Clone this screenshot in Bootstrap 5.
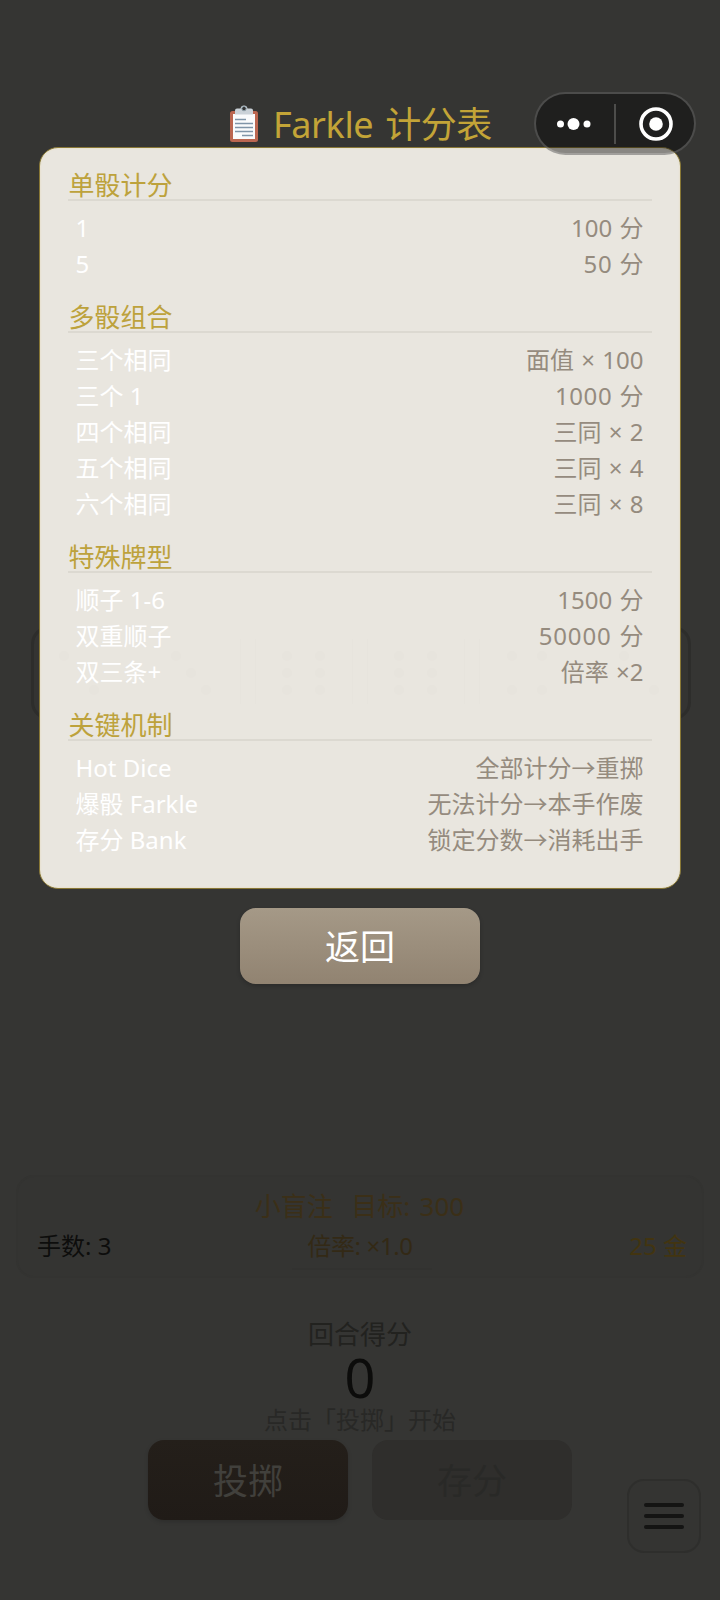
<!DOCTYPE html>
<html lang="zh-CN">
<head>
<meta charset="utf-8">
<meta name="viewport" content="width=device-width, initial-scale=1">
<title>Farkle 计分表</title>
<link href="https://cdn.jsdelivr.net/npm/bootstrap@5.3.0/dist/css/bootstrap.min.css" rel="stylesheet">
<style>
  body { background: #353533; font-family: "Noto Sans", "Noto Sans CJK SC", sans-serif; height: 1600px; overflow: hidden; }
  .game { height: 1600px; padding-top: 626px; }
  .dice-tray { width: 660px; height: 94px; margin-left: 31px; border: 3px solid #2d2d2b; border-radius: 18px; background: #343432; }
  .hud { width: 688px; height: 103px; margin: 455px 0 0 16px; border: 2px solid #333331; border-radius: 18px; padding: 9px 15px 0 19px; line-height: 40px; font-size: 24px; background: #343432; }
  .hud-goal { font-size: 26px; color: #3b2f17; white-space: pre; word-spacing: 2.5px; padding-right: 5px; }
  .hud-row { display: grid; grid-template-columns: 1fr auto 1fr; }
  .hud-hands { color: #0d0d0c; }
  .hud-mult { color: #332915; letter-spacing: -.35px; margin-right: 4px; }
  .hud-gold { color: #423410; }
  .hud-bar { width: 140px; height: 2px; background: #323230; margin: 2px auto 0; }
  .turn { line-height: 36px; margin-top: 38px; height: 124px; }
  .turn-label { font-size: 26px; color: #22221f; }
  .turn-score { font-size: 54px; color: #0c0c0b; line-height: 50px; }
  .turn-hint { font-size: 24px; color: #282826; }
  .btn-game { font-size: 35px; line-height: 1; border: 0; border-radius: 16px; padding: 0; }
  .btn-roll { width: 200px; height: 80px; background: linear-gradient(#241f1a, #201b17); color: #41403c; box-shadow: 0 2px 4px rgba(0,0,0,.15); }
  .btn-bank { width: 200px; height: 80px; background: #2f2e2c; color: #292927; }
  .menu-btn { left: 627px; top: 1478.5px; width: 74px; height: 74px; border: 2px solid #2e2e2c; border-radius: 17px; background: #343432; padding: 0; }
  .rules { padding-top: 99px; }
  .rules-title { height: 48px; font-size: 36px; line-height: 50px; color: #c3a437; padding: 2px 0 0 1px; }
  .rules-title span { letter-spacing: -.4px; word-spacing: 3px; padding-top: 1px; }
  .rules-panel { width: 642px; height: 742px; border: 1.5px solid #887735; border-radius: 19px; background: #e9e6df; padding: 22.5px 28px 0 28px; margin-right: 1px; box-shadow: inset 0 0 2px #e4dab1; }
  .rules-head { height: 30px; line-height: 29px; font-size: 26px; color: #bda23c; border-bottom: 2px solid #dcd9d1; margin-bottom: 9px; text-indent: 1px; }
  .rules-sec { margin-bottom: 21px; }
  .rules-line { height: 36px; line-height: 36px; font-size: 24px; padding: 0 8px; color: #fff; white-space: nowrap; }
  .rules-line span:last-child { color: #958b7e; word-spacing: 1px; }
  .n { letter-spacing: .6px; }
  .btn-back { width: 240px; height: 76px; margin-top: 19px; background: linear-gradient(#a59987, #918371); color: #fff; box-shadow: 0 2px 4px rgba(0,0,0,.2); }
  .capsule { left: 534px; top: 92px; width: 162px; height: 63px; border-radius: 32px; border: 2px solid rgba(255,255,255,.2); background: rgba(0,0,0,.41); }
</style>
</head>
<body>
<main class="game">
  <div class="dice-tray"></div>
  <section class="hud">
    <div class="hud-goal text-center">小盲注  目标: 300</div>
    <div class="hud-row">
      <span class="hud-hands">手数: 3</span>
      <span class="hud-mult">倍率: ×1.0</span>
      <span class="hud-gold text-end">25 金</span>
    </div>
    <div class="hud-bar"></div>
  </section>
  <section class="turn text-center">
    <div class="turn-label">回合得分</div>
    <div class="turn-score">0</div>
    <div class="turn-hint">点击「投掷」开始</div>
  </section>
  <div class="d-flex justify-content-center gap-4">
    <button class="btn btn-game btn-roll">投掷</button>
    <button class="btn btn-game btn-bank">存分</button>
  </div>
  <button class="btn menu-btn position-absolute d-flex align-items-center justify-content-center" aria-label="菜单">
    <svg width="44" height="30" viewBox="0 0 44 30" stroke="#141413" stroke-width="4" stroke-linecap="round"><path d="M4 4H40M4 15H40M4 26H40"/></svg>
  </button>
</main>

<div class="rules position-absolute top-0 start-0 w-100 d-flex flex-column align-items-center">
  <h1 class="rules-title m-0 fw-normal d-flex align-items-center">
    <svg width="30" height="38" viewBox="0 0 30 38" style="margin-right:14px">
      <rect x="1" y="6" width="28" height="31" rx="2.5" fill="#bb6650"/>
      <path d="M4 9H26V34H4Z" fill="#fafbfc"/>
      <path d="M6 9.5V5.5Q6 3.5 8 3.5H11.5Q12 .5 15 .5T18.500 3.500H22Q24 3.500 24 5.500V9.500Z" fill="#cbd2d8"/>
      <circle cx="15" cy="3.600" r="2.200" fill="#333" stroke="#8fa0aa"/>
      <path d="M6 14.500H17M6 18.500H24M6 22.500H24M6 26.500H24M13 30.500H24" stroke="#8095a8" stroke-width="1.500"/>
    </svg>
    <span>Farkle 计分表</span>
  </h1>
  <div class="rules-panel position-relative">
    <svg class="position-absolute" style="left:0;top:476px" width="638" height="100" fill="#e7e4dd">
      <g fill="none" stroke="#e7e4dd"><path d="M200.500 15V80M215.500 15V80M312.500 15V80M327.500 15V80M424.500 15V80M439.500 15V80"/></g>
      <circle cx="24" cy="32" r="5"/><circle cx="54" cy="66" r="5"/>
      <circle cx="136" cy="32" r="5"/><circle cx="151" cy="49" r="5"/><circle cx="166" cy="66" r="5"/>
      <circle cx="247" cy="32" r="5"/><circle cx="280" cy="32" r="5"/><circle cx="247" cy="49" r="5"/><circle cx="280" cy="49" r="5"/><circle cx="247" cy="66" r="5"/><circle cx="280" cy="66" r="5"/>
      <circle cx="359" cy="32" r="5"/><circle cx="392" cy="32" r="5"/><circle cx="359" cy="49" r="5"/><circle cx="392" cy="49" r="5"/><circle cx="359" cy="66" r="5"/><circle cx="392" cy="66" r="5"/>
      <circle cx="472" cy="32" r="5"/><circle cx="502" cy="32" r="5"/><circle cx="472" cy="66" r="5"/><circle cx="502" cy="66" r="5"/>
      <circle cx="584" cy="32" r="5"/><circle cx="614" cy="66" r="5"/>
    </svg>
    <div class="position-relative">
    <section class="rules-sec">
      <div class="rules-head">单骰计分</div>
      <div class="rules-line d-flex justify-content-between"><span>1</span><span>100 分</span></div>
      <div class="rules-line d-flex justify-content-between"><span>5</span><span><b class="n fw-normal">50</b> 分</span></div>
    </section>
    <section class="rules-sec">
      <div class="rules-head">多骰组合</div>
      <div class="rules-line d-flex justify-content-between"><span>三个相同</span><span>面值 × 100</span></div>
      <div class="rules-line d-flex justify-content-between"><span>三个 1</span><span><b class="n fw-normal">1000</b> 分</span></div>
      <div class="rules-line d-flex justify-content-between"><span>四个相同</span><span>三同 × 2</span></div>
      <div class="rules-line d-flex justify-content-between"><span>五个相同</span><span>三同 × 4</span></div>
      <div class="rules-line d-flex justify-content-between"><span>六个相同</span><span>三同 × 8</span></div>
    </section>
    <section class="rules-sec">
      <div class="rules-head">特殊牌型</div>
      <div class="rules-line d-flex justify-content-between"><span>顺子 1-6</span><span>1500 分</span></div>
      <div class="rules-line d-flex justify-content-between"><span>双重顺子</span><span style="letter-spacing:.8px;margin-right:-.8px">50000 分</span></div>
      <div class="rules-line d-flex justify-content-between"><span>双三条+</span><span>倍率 ×2</span></div>
    </section>
    <section>
      <div class="rules-head">关键机制</div>
      <div class="rules-line d-flex justify-content-between"><span>Hot Dice</span><span>全部计分→重掷</span></div>
      <div class="rules-line d-flex justify-content-between"><span>爆骰 Farkle</span><span>无法计分→本手作废</span></div>
      <div class="rules-line d-flex justify-content-between"><span>存分 Bank</span><span>锁定分数→消耗出手</span></div>
    </section>
    </div>
  </div>
  <button class="btn btn-game btn-back">返回</button>
</div>

<div class="capsule position-absolute">
  <svg class="d-block" width="158" height="59" viewBox="0 0 158 59" fill="#fff">
    <circle cx="24.500" cy="30" r="3.500"/><circle cx="37.500" cy="30" r="6"/><circle cx="51" cy="30" r="3.500"/>
    <path d="M79 10V50" stroke="#4d4d4b" stroke-width="2"/>
    <circle cx="120" cy="30" r="15" fill="none" stroke="#fff" stroke-width="3.600"/><circle cx="120" cy="30" r="6.800"/>
  </svg>
</div>
<script src="https://cdn.jsdelivr.net/npm/bootstrap@5.3.0/dist/js/bootstrap.bundle.min.js"></script>
</body>
</html>
